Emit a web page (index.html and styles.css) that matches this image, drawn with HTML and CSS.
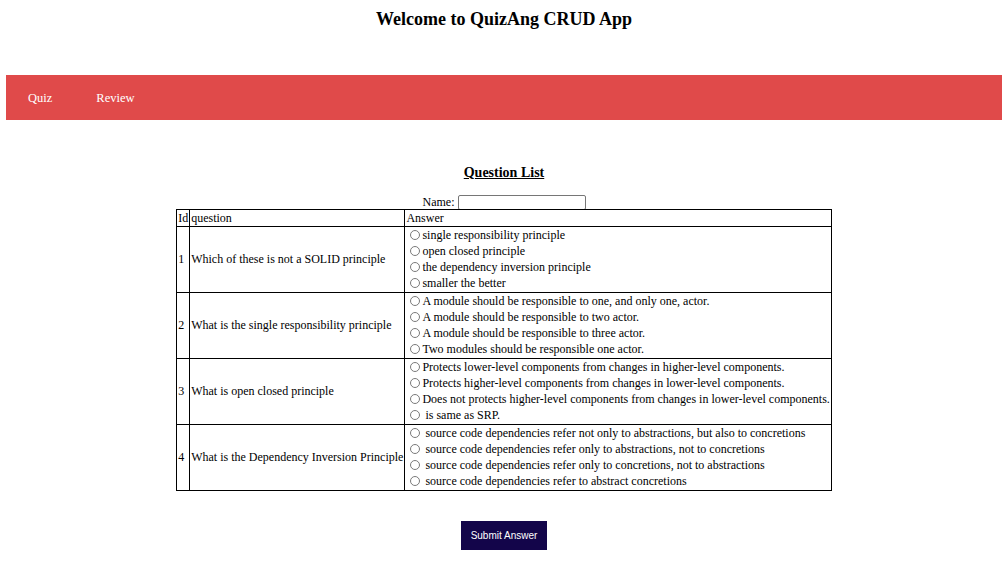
FILE: index.html
```html
<!DOCTYPE html>
<html>
<head>
<meta charset="utf-8">
<title>QuizAng</title>
<link rel="stylesheet" href="styles.css">
</head>
<body>
<h3 class="app-title">Welcome to QuizAng CRUD App</h3>
<nav class="topnav">
  <a class="nav-link" href="#">Quiz</a>
  <a class="nav-link" href="#">Review</a>
</nav>
<main class="quiz">
  <h4 class="list-title">Question List</h4>
  <div class="name-row">Name: <input class="name-input" type="text"></div>
  <table class="qtable">
    <thead>
      <tr><th class="col-id">Id</th><th>question</th><th>Answer</th></tr>
    </thead>
    <tbody>
      <tr>
        <td>1</td>
        <td>Which of these is not a SOLID principle</td>
        <td>
          <label class="opt"><input class="radio" type="radio" name="q1">single responsibility principle</label>
          <label class="opt"><input class="radio" type="radio" name="q1">open closed principle</label>
          <label class="opt"><input class="radio" type="radio" name="q1">the dependency inversion principle</label>
          <label class="opt"><input class="radio" type="radio" name="q1">smaller the better</label>
        </td>
      </tr>
      <tr>
        <td>2</td>
        <td>What is the single responsibility principle</td>
        <td>
          <label class="opt"><input class="radio" type="radio" name="q2">A module should be responsible to one, and only one, actor.</label>
          <label class="opt"><input class="radio" type="radio" name="q2">A module should be responsible to two actor.</label>
          <label class="opt"><input class="radio" type="radio" name="q2">A module should be responsible to three actor.</label>
          <label class="opt"><input class="radio" type="radio" name="q2">Two modules should be responsible one actor.</label>
        </td>
      </tr>
      <tr>
        <td>3</td>
        <td>What is open closed principle</td>
        <td>
          <label class="opt"><input class="radio" type="radio" name="q3">Protects lower-level components from changes in higher-level components.</label>
          <label class="opt"><input class="radio" type="radio" name="q3">Protects higher-level components from changes in lower-level components.</label>
          <label class="opt"><input class="radio" type="radio" name="q3">Does not protects higher-level components from changes in lower-level components.</label>
          <label class="opt"><input class="radio" type="radio" name="q3"> is same as SRP.</label>
        </td>
      </tr>
      <tr>
        <td>4</td>
        <td>What is the Dependency Inversion Principle</td>
        <td>
          <label class="opt"><input class="radio" type="radio" name="q4"> source code dependencies refer not only to abstractions, but also to concretions</label>
          <label class="opt"><input class="radio" type="radio" name="q4"> source code dependencies refer only to abstractions, not to concretions</label>
          <label class="opt"><input class="radio" type="radio" name="q4"> source code dependencies refer only to concretions, not to abstractions</label>
          <label class="opt"><input class="radio" type="radio" name="q4"> source code dependencies refer to abstract concretions</label>
        </td>
      </tr>
    </tbody>
  </table>
  <div class="actions"><button class="submit-btn" type="button">Submit Answer</button></div>
</main>
</body>
</html>
```
FILE: styles.css
```css
html, body {
  margin: 0;
  padding: 0;
  background: #ffffff;
  font-family: "Liberation Serif", "Times New Roman", serif;
  color: #000;
}

.app-title {
  margin: 9px 0 0;
  font-size: 18px;
  line-height: 21px;
  font-weight: bold;
  text-align: center;
}

.topnav {
  margin: 45px 6px 0;
  height: 45px;
  background: #e04a4a;
  display: flex;
  align-items: center;
  padding-left: 22px;
}

.nav-link {
  color: #ffffff;
  text-decoration: none;
  font-size: 12.5px;
  margin-right: 44px;
  line-height: 16px;
}

.quiz {
  display: flex;
  flex-direction: column;
  align-items: center;
  padding-top: 45px;
}

.list-title {
  margin: 0;
  font-size: 14px;
  line-height: 16px;
  font-weight: bold;
  text-decoration: underline;
}

.name-row {
  margin-top: 14px;
  font-size: 12px;
  line-height: 15px;
  height: 14px;
  display: flex;
  align-items: flex-start;
  gap: 3px;
}

.name-input {
  box-sizing: border-box;
  width: 128px;
  height: 15px;
  margin: 0;
  border: 1px solid #767676;
  border-radius: 2px;
  padding: 0 2px;
  font-size: 12px;
}

.qtable {
  border-collapse: collapse;
  font-size: 12px;
  margin: 0;
}

.qtable th,
.qtable td {
  border: 1px solid #000;
  padding: 0 1px 1px;
  text-align: left;
  font-weight: normal;
  vertical-align: middle;
}

.qtable th {
  line-height: 14px;
  padding: 1px;
}

.opt {
  display: block;
  line-height: 16px;
  white-space: nowrap;
}

.radio {
  -webkit-appearance: none;
  appearance: none;
  box-sizing: border-box;
  display: inline-block;
  width: 10px;
  height: 10px;
  margin: 0 2px 0 4px;
  border: 1px solid #7a7a7a;
  border-radius: 50%;
  background: #fff;
  vertical-align: -1px;
}

.actions {
  margin-top: 30px;
}

.submit-btn {
  background: #13054a;
  color: #ffffff;
  border: none;
  height: 29px;
  padding: 0 10px;
  font-family: "Liberation Sans", Arial, sans-serif;
  font-size: 10px;
  cursor: pointer;
}
```
